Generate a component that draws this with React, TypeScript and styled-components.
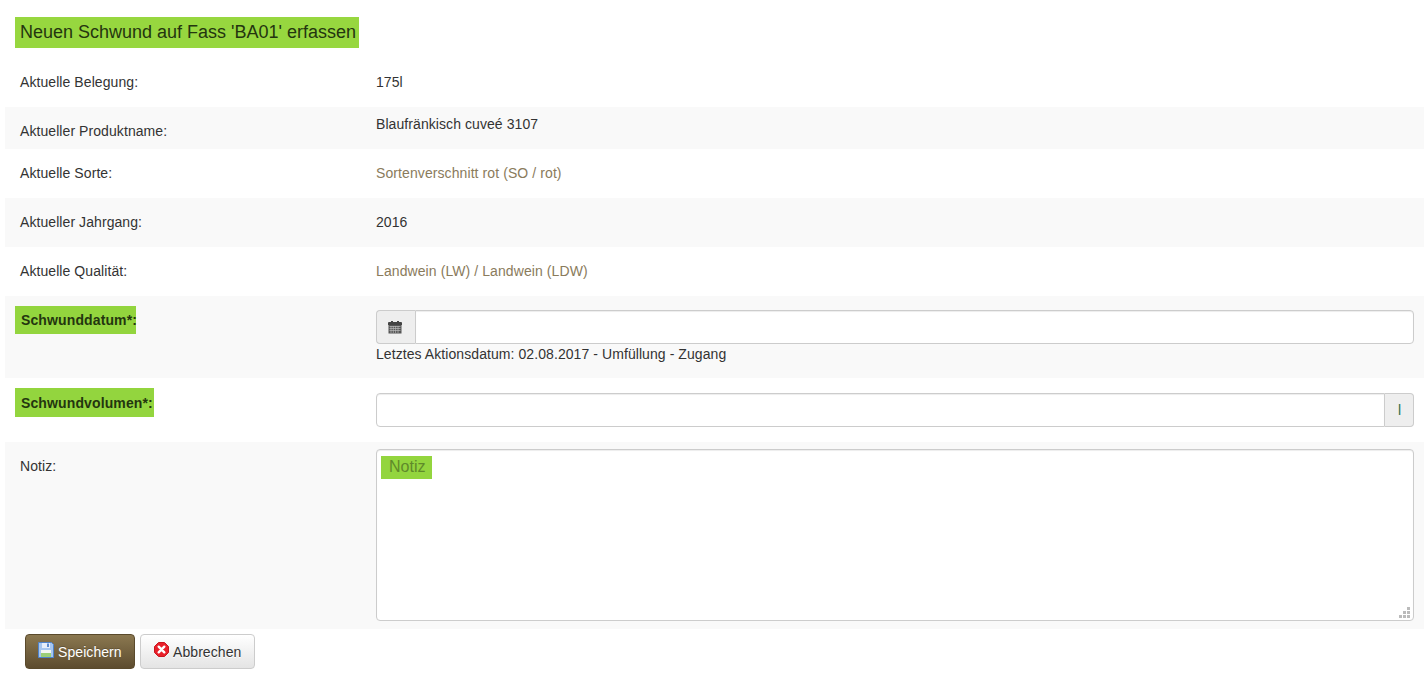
import React from "react";
import styled, { createGlobalStyle } from "styled-components";

const Global = createGlobalStyle`
  html, body { margin: 0; padding: 0; background: #fff; }
  body { font-family: "Liberation Sans", Arial, sans-serif; font-size: 14px; line-height: 20px; color: #333; letter-spacing: 0.075px; }
`;

const Page = styled.div`
  width: 1424px;
  height: 677px;
  padding-top: 17px;
  box-sizing: border-box;
  overflow: hidden;
`;

const Title = styled.h1`
  display: table;
  margin: 0 0 10px 15px;
  padding: 0 3px 0 5px;
  height: 31px;
  line-height: 31px;
  font-size: 18px;
  font-weight: 400;
  letter-spacing: 0;
  color: #24350f;
  background: #97d73f;
`;

const Row = styled.div<{ $h: number; $shaded?: boolean }>`
  display: grid;
  grid-template-columns: 371px 1fr;
  height: ${(p) => p.$h}px;
  margin-left: 5px;
  padding-right: 10px;
  background: ${(p) => (p.$shaded ? "#f9f9f9" : "#fff")};
`;

const Label = styled.div<{ $top?: number }>`
  padding: ${(p) => p.$top ?? 14}px 0 0 15px;
`;

const Required = styled.span<{ $w: number; $h: number; $textTop: number }>`
  display: inline-block;
  margin: 0 0 0 -5px;
  padding: ${(p) => p.$textTop}px 0 0 6px;
  width: ${(p) => p.$w}px;
  height: ${(p) => p.$h}px;
  box-sizing: border-box;
  font-weight: 700;
  letter-spacing: 0.12px;
  white-space: nowrap;
  color: #24350f;
  background: #93d53e;
`;

const Value = styled.div<{ $top?: number; $muted?: boolean }>`
  padding-top: ${(p) => p.$top ?? 14}px;
  color: ${(p) => (p.$muted ? "#8a7b5c" : "#333")};
  letter-spacing: ${(p) => (p.$muted ? "0.09px" : "0.075px")};
`;

const InputGroup = styled.div`
  display: flex;
  height: 34px;
`;

const Addon = styled.span<{ $side: "left" | "right" }>`
  display: flex;
  align-items: center;
  justify-content: center;
  flex: none;
  box-sizing: border-box;
  width: ${(p) => (p.$side === "left" ? 39 : 29)}px;
  padding: ${(p) => (p.$side === "left" ? "0 2px 0 0" : "0 0 0 1px")};
  background: #eee;
  border: 1px solid #ccc;
  color: #2f6f4a;
  border-radius: ${(p) => (p.$side === "left" ? "4px 0 0 4px" : "0 4px 4px 0")};
  ${(p) => (p.$side === "left" ? "border-right: 0;" : "border-left: 0;")}
`;

const TextInput = styled.input<{ $side: "left" | "right" }>`
  flex: 1;
  min-width: 0;
  box-sizing: border-box;
  height: 34px;
  padding: 6px 12px;
  background: #fff;
  border: 1px solid #ccc;
  outline: none;
  box-shadow: inset 0 1px 1px rgba(0, 0, 0, 0.075);
  border-radius: ${(p) => (p.$side === "left" ? "0 4px 4px 0" : "4px 0 0 4px")};
`;

const Help = styled.div`
  color: #333;
`;

const NoteBox = styled.div`
  position: relative;
  height: 172px;
`;

const NoteArea = styled.textarea`
  display: block;
  width: 100%;
  height: 172px;
  box-sizing: border-box;
  padding: 6px 4px;
  font: 16px/22px "Liberation Sans", Arial, sans-serif;
  background: #fff;
  border: 1px solid #ccc;
  border-radius: 4px;
  outline: none;
  resize: none;
  box-shadow: inset 0 1px 1px rgba(0, 0, 0, 0.075);
  &::placeholder {
    color: #5f8a2a;
    opacity: 1;
    background: #93d53e;
    padding: 0 5px 1px 8px;
    width: 38px;
    display: block;
  }
`;

const Grip = styled.svg`
  position: absolute;
  right: 4px;
  bottom: 3px;
`;

const Actions = styled.div`
  display: flex;
  gap: 5px;
  margin: 5px 0 0 25px;
`;

const Button = styled.button<{ $primary?: boolean }>`
  display: flex;
  align-items: center;
  height: 35px;
  padding: 0 0 0 ${(p) => (p.$primary ? 12 : 13)}px;
  box-sizing: border-box;
  width: ${(p) => (p.$primary ? 110 : 115)}px;
  font: 14px/20px "Liberation Sans", Arial, sans-serif;
  letter-spacing: 0.075px;
  border-radius: 4px;
  color: ${(p) => (p.$primary ? "#fff" : "#333")};
  border: 1px solid ${(p) => (p.$primary ? "#5a4a2c" : "#ccc")};
  background: ${(p) =>
    p.$primary ? "linear-gradient(#8b7850, #5d4c2f)" : "linear-gradient(#fff, #e4e4e4)"};
  text-shadow: ${(p) => (p.$primary ? "0 -1px 0 rgba(0,0,0,.2)" : "0 1px 0 #fff")};
`;

const ButtonIcon = styled.svg`
  flex: none;
  margin: -4px 4px 0 0;
`;

const Calendar = () => (
  <svg width="14" height="14" viewBox="0 0 14 14" aria-hidden="true">
    <path d="M1 2h2V1h2v1h4V1h2v1h2a1 1 0 0 1 1 1v2H0V3a1 1 0 0 1 1-1z" fill="#444" />
    <rect x="0.5" y="5" width="13" height="8.5" fill="#555" />
    <path d="M1.5 6.5h11M1.5 8.5h11M1.5 10.5h11M3 6v7M5.3 6v7M7.6 6v7M10 6v7" stroke="#bbb" strokeWidth="0.7" />
  </svg>
);

const Floppy = () => (
  <ButtonIcon width="16" height="16" viewBox="0 0 16 16" aria-hidden="true">
    <path d="M.5.5h13l2 2v13H.5z" fill="#a6c6ef" stroke="#4f83cc" />
    <rect x="4" y="1" width="8" height="5" fill="#e6eefa" />
    <rect x="9" y="1.5" width="2" height="3.5" fill="#5c8bd0" />
    <rect x="3" y="8" width="10" height="7" fill="#f4f7f2" />
    <rect x="3" y="11" width="10" height="4" fill="#9ccf78" />
  </ButtonIcon>
);

const Cancel = () => (
  <ButtonIcon width="15" height="15" viewBox="0 0 15 15" aria-hidden="true">
    <path d="M4.5.5h6l4 4v6l-4 4h-6l-4-4v-6z" fill="#e8202a" stroke="#c8161f" strokeLinejoin="round" />
    <path d="M4.7 4.7l5.6 5.6M10.3 4.7l-5.6 5.6" stroke="#fff" strokeWidth="2.4" strokeLinecap="round" />
  </ButtonIcon>
);

export default function App() {
  return (
    <Page>
      <Global />
      <Title>Neuen Schwund auf Fass 'BA01' erfassen</Title>
      <Row $h={49}>
        <Label>Aktuelle Belegung:</Label>
        <Value>175l</Value>
      </Row>
      <Row $h={42} $shaded>
        <Label>Aktueller Produktname:</Label>
        <Value $top={7}>Blaufränkisch cuveé 3107</Value>
      </Row>
      <Row $h={49}>
        <Label>Aktuelle Sorte:</Label>
        <Value $muted>Sortenverschnitt rot (SO / rot)</Value>
      </Row>
      <Row $h={49} $shaded>
        <Label>Aktueller Jahrgang:</Label>
        <Value>2016</Value>
      </Row>
      <Row $h={49}>
        <Label>Aktuelle Qualität:</Label>
        <Value $muted>Landwein (LW) / Landwein (LDW)</Value>
      </Row>
      <Row $h={82} $shaded>
        <Label $top={10}>
          <Required $w={121} $h={28} $textTop={4}>Schwunddatum*:</Required>
        </Label>
        <Value $top={14}>
          <InputGroup>
            <Addon $side="left">
              <Calendar />
            </Addon>
            <TextInput $side="left" />
          </InputGroup>
          <Help>Letztes Aktionsdatum: 02.08.2017 - Umfüllung - Zugang</Help>
        </Value>
      </Row>
      <Row $h={64}>
        <Label $top={10}>
          <Required $w={139} $h={29} $textTop={5}>Schwundvolumen*:</Required>
        </Label>
        <Value $top={15}>
          <InputGroup>
            <TextInput $side="right" />
            <Addon $side="right">l</Addon>
          </InputGroup>
        </Value>
      </Row>
      <Row $h={187} $shaded>
        <Label>Notiz:</Label>
        <Value $top={7}>
          <NoteBox>
            <NoteArea placeholder="Notiz" />
            <Grip width="11" height="11" viewBox="0 0 11 11" aria-hidden="true">
              <path d="M8 0h3v3H8zM4 4h3v3H4zM8 4h3v3H8zM0 8h3v3H0zM4 8h3v3H4zM8 8h3v3H8z" fill="#bbb" />
            </Grip>
          </NoteBox>
        </Value>
      </Row>
      <Actions>
        <Button $primary>
          <Floppy />
          Speichern
        </Button>
        <Button>
          <Cancel />
          Abbrechen
        </Button>
      </Actions>
    </Page>
  );
}
